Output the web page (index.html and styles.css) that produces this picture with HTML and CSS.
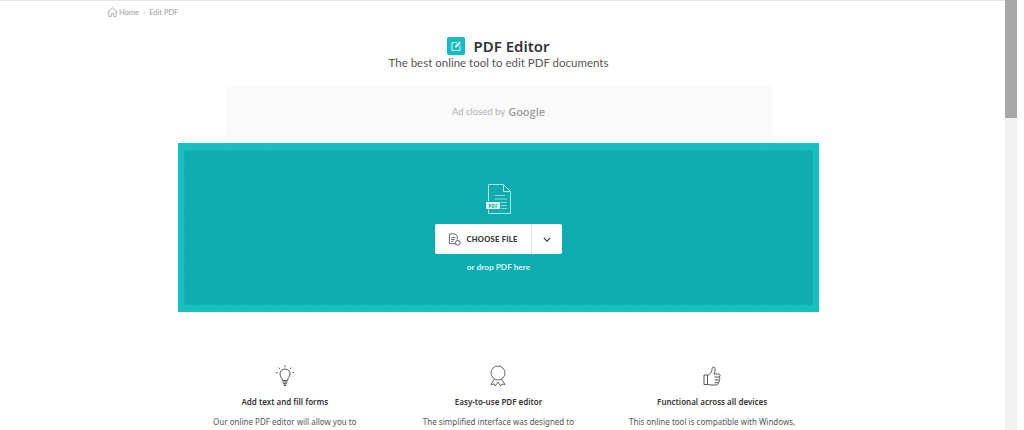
FILE: index.html
```html
<!DOCTYPE html>
<html lang="en">
<head>
    <meta charset="UTF-8">
    <meta name="viewport" content="width=device-width, initial-scale=1.0">
    <title>PDF Editor</title>
    <link rel="stylesheet" href="styles.css">
</head>
<body>

    <div class="window">
        <div class="page">
            <div class="breadcrumb">
                <svg class="home-icon" viewBox="0 0 12 11" width="11" height="10" fill="none" stroke="#9a9a9a" stroke-width="0.8">
                    <path d="M0.6 5.6 6 0.8l5.4 4.8M2 4.6v5.8h2.800V7.200h2.400v3.200H10V4.600"/>
                </svg>
                <span>Home</span>
                <span class="sep">›</span>
                <span>Edit PDF</span>
            </div>

            <div class="heading">
                <div class="title-row">
                    <span class="logo">
                        <svg viewBox="0 0 18 18" width="18" height="18" fill="none" stroke="#d8f7f7" stroke-width="1">
                            <path d="M10 5.500H5v8h8V8.500"/>
                            <path d="M8 10.500V9l4.500-4.500 1.500 1.500L9.500 10.500z" fill="#d8f7f7" stroke="none"/>
                        </svg>
                    </span>
                    <h1>PDF Editor</h1>
                </div>
                <p class="subtitle">The best online tool to edit PDF documents</p>
            </div>

            <div class="ad">Ad closed by <span class="google">Google</span></div>

            <div class="dropzone">
                <div class="dropzone-inner">
                    <svg class="pdf-icon" viewBox="0 0 26 30" width="26" height="30" fill="none" stroke="#a9e8ea" stroke-width="1">
                        <path d="M2.500 17V.5h15l7 7v22h-22v-4"/>
                        <path d="M17.500.5v7h7"/>
                        <path d="M9 11.500h10M9 15h12M15 18.500h6M15 21.500h6M15 24.500h6" stroke-width="0.8"/>
                        <rect x="0" y="18" width="14" height="7" fill="#eafbfb" stroke="none"/>
                        <text x="7" y="23.800" class="pdf-label">PDF</text>
                    </svg>
                    <div class="file-button">
                        <div class="choose">
                            <svg viewBox="0 0 14 14" width="13" height="13" fill="none" stroke="#444" stroke-width="0.9">
                                <path d="M8 11.500H1.500V1h6l2.500 2.500V7"/>
                                <path d="M3.500 5h4.500M3.500 7h3.500M3.500 9h2.500"/>
                                <circle cx="10.500" cy="10.500" r="2.600"/>
                            </svg>
                            <span>CHOOSE FILE</span>
                        </div>
                        <div class="arrow">
                            <svg viewBox="0 0 10 6" width="8" height="5" fill="none" stroke="#333" stroke-width="1.400">
                                <path d="M1 1l4 4 4-4"/>
                            </svg>
                        </div>
                    </div>
                    <p class="drop-text">or drop PDF here</p>
                </div>
            </div>

            <div class="features">
                <div class="feature">
                    <svg viewBox="0 0 20 22" width="20" height="22" fill="none" stroke="#444" stroke-width="0.9">
                        <path d="M7.500 15.500c0-2.500-2.500-3.500-2.500-6.500a5 5 0 0 1 10 0c0 3-2.500 4-2.500 6.500z"/>
                        <path d="M7.500 17h5M8 18.700h4M9 20.400h2" stroke-width="1.100"/>
                        <path d="M10 .5v1.800M3.600 2.600l1.200 1.300M16.400 2.600l-1.200 1.300M.8 7.400l1.800.5M19.200 7.400l-1.800.5"/>
                    </svg>
                    <h3>Add text and fill forms</h3>
                    <p>Our online PDF editor will allow you to</p>
                </div>
                <div class="feature">
                    <svg viewBox="0 0 18 22" width="18" height="22" fill="none" stroke="#444" stroke-width="0.8">
                        <circle cx="9" cy="8" r="7"/>
                        <path d="M5.500 14 2 19.500l3-.5 1.300 2L9 17l2.700 4 1.300-2 3 .5L12.500 14"/>
                    </svg>
                    <h3>Easy-to-use PDF editor</h3>
                    <p>The simplified interface was designed to</p>
                </div>
                <div class="feature">
                    <svg viewBox="0 0 20 22" width="20" height="22" fill="none" stroke="#444" stroke-width="0.9">
                        <path d="M2 10h3.500v9.500H2z"/>
                        <path d="M5.500 10.500c2.500-1 4-3 4.500-5.500 0-2 .5-3 1.500-3 1.500 0 2 2 1.500 4l-1 3h4.500c2 0 2 2.500.5 3 1.200.5 1.200 2.500-.2 3 1 .7.7 2.500-.6 2.700.5 1.100-.2 2.300-1.700 2.300H9c-1.500 0-2.500-.5-3.500-1"/>
                        <path d="M12.500 12h4.800M12.500 15h4.500M12.500 17.700h3.800"/>
                    </svg>
                    <h3>Functional across all devices</h3>
                    <p>This online tool is compatible with Windows,</p>
                </div>
            </div>
        </div>

        <div class="scrollbar"><div class="thumb"></div></div>
    </div>

</body>
</html>
```

FILE: styles.css
```css
html, body {
    margin: 0;
    height: 100%;
    overflow: hidden;
    background: white;
}
.window {
    display: flex;
    height: 430px;
    padding-right: 7px;
    box-sizing: border-box;
    font-family: "Noto Sans", Arial, sans-serif;
    color: #3c3c3c;
}
.page {
    flex: 1;
    overflow: hidden;
    padding-right: 8px;
    border-top: 1px solid #e6e6e6;
}
.scrollbar {
    width: 12px;
    background: #f1f1f1;
}
.thumb {
    height: 118px;
    background: #a8a8a8;
}
.breadcrumb {
    display: flex;
    align-items: center;
    gap: 1px;
    padding: 5px 0 0 107px;
    height: 12px;
    font-family: Lato, Arial, sans-serif;
    font-size: 7.5px;
    color: #9a9a9a;
}
.sep {
    padding: 0 3px;
}
.heading {
    text-align: center;
    margin-top: 18px;
}
.title-row {
    display: flex;
    justify-content: center;
    align-items: center;
    gap: 8px;
    height: 20px;
}
.logo {
    display: flex;
    align-items: center;
    justify-content: center;
    width: 18px;
    height: 18px;
    background: #17bcc0;
    border-radius: 2px;
}
h1 {
    margin: 0;
    font-size: 15px;
    font-weight: 600;
    color: #333;
}
.subtitle {
    margin: 0;
    font-family: Lato, Arial, sans-serif;
    font-size: 11.5px;
    font-weight: 400;
    line-height: 14px;
    color: #555;
}
.ad {
    width: 547px;
    height: 52px;
    margin: 15px auto 6px;
    background: #fafafa;
    display: flex;
    align-items: center;
    justify-content: center;
    gap: 3px;
    font-family: Lato, Arial, sans-serif;
    font-size: 9.5px;
    color: #b0b0b0;
}
.google {
    font-family: "Open Sans", Arial, sans-serif;
    font-size: 11px;
    font-weight: 600;
    color: #9e9e9e;
}
.dropzone {
    width: 641px;
    height: 169px;
    margin: 0 auto;
    padding: 7px 6px;
    box-sizing: border-box;
    background: #17bfc1;
}
.dropzone-inner {
    height: 100%;
    box-sizing: border-box;
    border: 1px dashed #12b4b7;
    background: #0eacaf;
    display: flex;
    flex-direction: column;
    align-items: center;
    padding-top: 33px;
}
.pdf-label {
    font-family: "Noto Sans", Arial, sans-serif;
    font-size: 5px;
    font-weight: 700;
    fill: #0eacaf;
    stroke: none;
    text-anchor: middle;
}
.file-button {
    display: flex;
    width: 127px;
    height: 30px;
    margin-top: 10px;
    background: white;
    border-radius: 2px;
}
.choose {
    flex: 1;
    display: flex;
    align-items: center;
    justify-content: center;
    gap: 5px;
    font-family: Lato, Arial, sans-serif;
    font-size: 7.5px;
    font-weight: 900;
    letter-spacing: 0.3px;
    color: #333;
    border-right: 1px solid #e4e4e4;
}
.arrow {
    width: 30px;
    display: flex;
    align-items: center;
    justify-content: center;
}
.drop-text {
    margin: 7px 0 0;
    font-family: Lato, Arial, sans-serif;
    font-size: 8.3px;
    font-weight: 700;
    line-height: 12px;
    color: #dff7f7;
}
.features {
    display: grid;
    grid-template-columns: repeat(3, 1fr);
    width: 641px;
    margin: 53px auto 0;
}
.feature {
    display: flex;
    flex-direction: column;
    align-items: center;
    text-align: center;
}
.feature h3 {
    margin: 9px 0 0;
    font-size: 8px;
    font-weight: 600;
    line-height: 12px;
    color: #333;
}
.feature p {
    margin: 8px 0 0;
    font-size: 8px;
    line-height: 12px;
    color: #555;
}
```
